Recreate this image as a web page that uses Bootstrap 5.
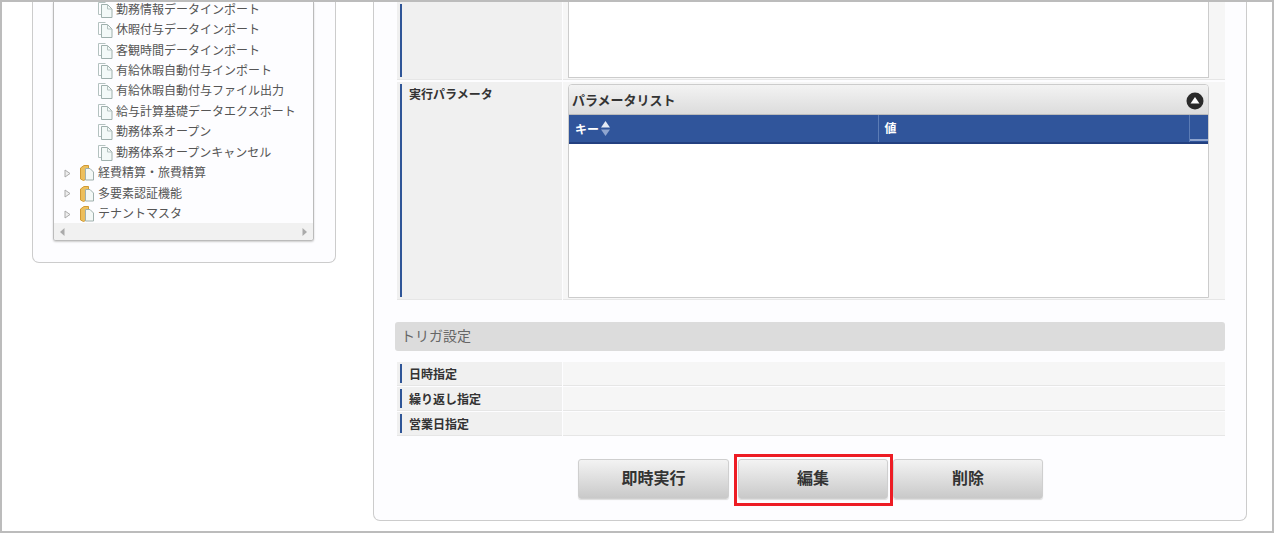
<!DOCTYPE html>
<html lang="ja">
<head>
<meta charset="utf-8">
<title>ジョブ詳細</title>
<link href="https://cdn.jsdelivr.net/npm/bootstrap@5.3.0/dist/css/bootstrap.min.css" rel="stylesheet">
<style>
html,body{margin:0;height:533px;overflow:hidden;background:#fff}
body{font-family:"Liberation Sans","Noto Sans CJK JP",sans-serif;color:#333}
.shot{height:533px;border:2px solid #bcbcbc;overflow:hidden;background:#fff}
.side-panel{width:304px;height:261px;margin-left:30px;margin-right:37px;background:#fdfdff;border:1px solid #ccc;border-top:0;border-radius:0 0 7px 7px;padding-left:20px;flex:none}
.tree-box{width:261px;height:239px;border:1px solid #bbb;border-top:0;border-radius:0 0 3px 3px;box-shadow:0 1px 2px #ccc;overflow:hidden;display:flex;flex-direction:column}
.tree{flex:1;margin:-2.6px 0 0;padding:0;list-style:none;font-size:12px;color:#555;overflow:hidden}
.tree li{height:20.45px;display:flex;align-items:center;white-space:nowrap}
.tree .leaf{padding-left:44px}
.tree .branch{padding-left:10px}
.tree svg{flex:none}
.tree .leaf svg{margin-right:3px}
.tree .branch svg.arr{margin-right:9px}
.tree .branch svg.fold{margin-right:4px}
.hbar{height:17px;background:#f1f1f1;display:flex;justify-content:space-between;align-items:center;padding:0 6px;flex:none}
.main-panel{width:874px;height:519px;background:#fdfdff;border:1px solid #ccc;border-top:0;border-radius:0 0 7px 7px;padding:0 21px;flex:none}
.info-row{display:flex;gap:1px;margin-left:2px}
.info-row+.info-row{margin-top:2px}
.info-label{width:165px;flex:none;background:#f0f0f0;padding:2px 0 2px 3px;font-size:12px;font-weight:700;color:#333;border-bottom:1px solid #e6e6e6}
.info-label>div{height:100%;border-left:2px solid #2f5597;padding-left:7px}
.info-value{flex:1;background:#f6f6f6;border-bottom:1px solid #e6e6e6}
.big-row{height:78px}
.big-row .info-value{padding:0 16px 0 5px}
.box-white{height:76px;background:#fff;border:1px solid #ccc;border-top:0}
.param-row{height:218px}
.param-row .info-value{padding:2px 16px 1px 5px}
.param-row .info-label>div{padding-top:2px}
.param-card{height:214px;border:1px solid #ccc;border-radius:4px 4px 0 0;background:#fff;overflow:hidden}
.param-head{height:30px;background:linear-gradient(#f3f3f3,#dcdcdc);border-bottom:1px solid #bbb;font-size:13px;font-weight:700;padding:2px 4px 0 3px;display:flex;align-items:center;justify-content:space-between;color:#333}
.param-table{margin:0;table-layout:fixed;width:100%;border-collapse:collapse}
.param-table th{height:28px;background:#30559b;color:#fff;font-size:12px;font-weight:700;padding:0 6px;border:0;border-right:1px solid #5c7cb5;border-bottom:2px solid #234080;vertical-align:middle;line-height:1}
.param-table th:last-child{padding:0;border-right:0;position:relative}
.sort-mark{margin-left:2px;vertical-align:-2px}
.scroll-mark{position:absolute;left:0;right:0;bottom:1px;height:2px;background:#8fa5cf}
.sec-title{height:29px;margin-top:22px;background:#dcdcdc;border-radius:3px;font-size:14px;color:#666;padding-left:6px;display:flex;align-items:center}
.sec-rows{margin-top:11px}
.sec-rows .info-row{height:24px;margin-top:1px}
.sec-rows .info-row:first-child{margin-top:0}
.sec-rows .info-label>div{display:flex;align-items:center;padding-top:2px}
.action-bar{margin-top:23px;margin-left:183px;display:flex;align-items:flex-start}
.act-btn{height:40px;width:151px;padding:0;font-size:16px;font-weight:700;color:#333;background:linear-gradient(#f3f3f3,#c9c9c9);border:1px solid #cfcfcf;border-radius:3px;box-shadow:0 1px 1px #ddd}
.act-btn:hover{color:#333;background:linear-gradient(#f3f3f3,#c9c9c9);border-color:#cfcfcf}
.hl-wrap{position:relative;margin-left:9px;margin-right:5px}
.hl-wrap .act-btn{width:150px;display:block}
.hl-frame{position:absolute;left:-4px;top:-5px;width:159px;height:52px;border:3px solid #ed1c24;pointer-events:none}
.act-btn.last{width:150px}
</style>
</head>
<body>
<svg width="0" height="0" class="position-absolute">
  <defs>
    <symbol id="ic-doc" viewBox="0 0 15 16"><path d="M.5 12.500V.5h7" fill="none" stroke="#b4c2c0"/><path d="M.5 12.500h3" fill="none" stroke="#b4c2c0"/><path d="M3.500 2.500h6l4.500 4.500v8.500H3.500z" fill="#f3f9f8" stroke="#9fb0ad"/><path d="M9.500 2.500V7H14" fill="none" stroke="#b4c2c0"/></symbol>
    <symbol id="ic-folder" viewBox="0 0 14 16"><path d="M.5 3L4 .5h4.500V13L3.500 15.500.5 14z" fill="#ecbf5c" stroke="#d09a35"/><path d="M5.500 3.500h4.500l3.500 3.500v8H5.500z" fill="#f3f8f6" stroke="#9fb0ad"/></symbol>
    <symbol id="ic-arrow" viewBox="0 0 7 9"><path d="M1 1l5 3.500-5 3.500z" fill="#eee" stroke="#aaa"/></symbol>
  </defs>
</svg>
<div class="shot d-flex align-items-start">
  <aside class="side-panel">
    <div class="tree-box">
      <ul class="tree">
        <li class="leaf"><svg width="15" height="16"><use href="#ic-doc"/></svg><span>勤務情報データインポート</span></li>
        <li class="leaf"><svg width="15" height="16"><use href="#ic-doc"/></svg><span>休暇付与データインポート</span></li>
        <li class="leaf"><svg width="15" height="16"><use href="#ic-doc"/></svg><span>客観時間データインポート</span></li>
        <li class="leaf"><svg width="15" height="16"><use href="#ic-doc"/></svg><span>有給休暇自動付与インポート</span></li>
        <li class="leaf"><svg width="15" height="16"><use href="#ic-doc"/></svg><span>有給休暇自動付与ファイル出力</span></li>
        <li class="leaf"><svg width="15" height="16"><use href="#ic-doc"/></svg><span>給与計算基礎データエクスポート</span></li>
        <li class="leaf"><svg width="15" height="16"><use href="#ic-doc"/></svg><span>勤務体系オープン</span></li>
        <li class="leaf"><svg width="15" height="16"><use href="#ic-doc"/></svg><span>勤務体系オープンキャンセル</span></li>
        <li class="branch"><svg class="arr" width="7" height="9"><use href="#ic-arrow"/></svg><svg class="fold" width="14" height="16"><use href="#ic-folder"/></svg><span>経費精算・旅費精算</span></li>
        <li class="branch"><svg class="arr" width="7" height="9"><use href="#ic-arrow"/></svg><svg class="fold" width="14" height="16"><use href="#ic-folder"/></svg><span>多要素認証機能</span></li>
        <li class="branch"><svg class="arr" width="7" height="9"><use href="#ic-arrow"/></svg><svg class="fold" width="14" height="16"><use href="#ic-folder"/></svg><span>テナントマスタ</span></li>
      </ul>
      <div class="hbar">
        <svg width="5" height="8" viewBox="0 0 5 8"><path d="M4.500 0v8L0 4z" fill="#aaa"/></svg>
        <svg width="5" height="8" viewBox="0 0 5 8"><path d="M.5 0v8L5 4z" fill="#aaa"/></svg>
      </div>
    </div>
  </aside>

  <main class="main-panel">
    <div class="info-row big-row">
      <div class="info-label"><div></div></div>
      <div class="info-value"><div class="box-white"></div></div>
    </div>
    <div class="info-row param-row">
      <div class="info-label"><div>実行パラメータ</div></div>
      <div class="info-value">
        <div class="param-card">
          <div class="param-head"><span>パラメータリスト</span>
            <svg width="18" height="18" viewBox="0 0 18 18"><circle cx="9" cy="9" r="8.500" fill="#2b2b2b"/><path d="M9 5l4.500 6.500h-9z" fill="#fff"/></svg>
          </div>
          <table class="table param-table">
            <colgroup><col style="width:309px"><col style="width:311px"><col></colgroup>
            <thead><tr>
              <th>キー<svg class="sort-mark" width="9" height="15" viewBox="0 0 9 15"><path d="M4.500 0L9 6.500H0z" fill="#e4ebf6"/><path d="M4.500 15L9 8.500H0z" fill="#8fa5cf"/></svg></th>
              <th>値</th>
              <th><span class="scroll-mark"></span></th>
            </tr></thead>
          </table>
        </div>
      </div>
    </div>

    <div class="sec-title">トリガ設定</div>
    <div class="sec-rows">
      <div class="info-row"><div class="info-label"><div>日時指定</div></div><div class="info-value"></div></div>
      <div class="info-row"><div class="info-label"><div>繰り返し指定</div></div><div class="info-value"></div></div>
      <div class="info-row"><div class="info-label"><div>営業日指定</div></div><div class="info-value"></div></div>
    </div>

    <div class="action-bar">
      <button type="button" class="btn act-btn">即時実行</button>
      <div class="hl-wrap"><button type="button" class="btn act-btn">編集</button><span class="hl-frame"></span></div>
      <button type="button" class="btn act-btn last">削除</button>
    </div>
  </main>
</div>
<script src="https://cdn.jsdelivr.net/npm/bootstrap@5.3.0/dist/js/bootstrap.bundle.min.js"></script>
</body>
</html>
